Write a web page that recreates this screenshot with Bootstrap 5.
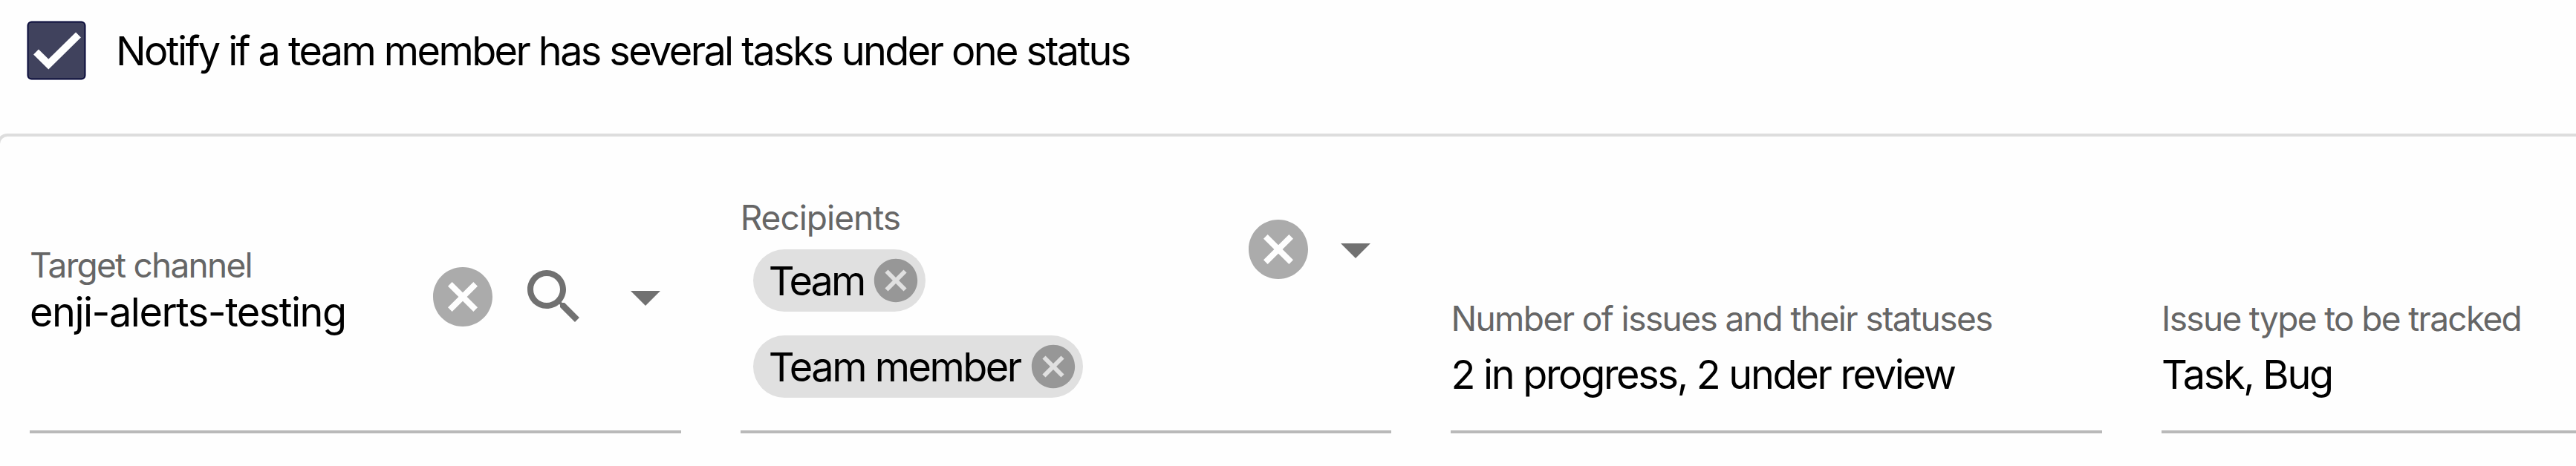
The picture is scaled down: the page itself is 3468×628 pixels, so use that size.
<!DOCTYPE html>
<html lang="en">
<head>
  <meta charset="UTF-8">
  <title>Notification settings</title>
  <link href="https://cdn.jsdelivr.net/npm/bootstrap@5.3.0/dist/css/bootstrap.min.css" rel="stylesheet">
  <style>
    body {
      background: #fefefe;
      color: #000;
      font-family: Inter, "Liberation Sans", sans-serif;
      font-size: 54px;
      line-height: 68px;
      letter-spacing: -2.3px;
      white-space: nowrap;
      overflow: hidden;
    }
    svg { flex: none; display: block; }

    .notify-row { height: 180px; padding: 28px 0 0 36px; gap: 40px; letter-spacing: -2.6px; }
    .notify-row label { line-height: 81px; }

    .panel { height: 448px; margin-left: -4px; padding-left: 40px; border: solid #ddd; border-width: 4px 0 0 4px; border-radius: 14px 0 0 0; gap: 80px; }
    .field { flex: none; width: 876.7px; height: 400px; border-bottom: 4px solid #b9b9b9; }
    .field:last-child { flex: 1 1 0; }
    .field-label { color: #666; font-size: 46px; line-height: 56px; letter-spacing: -1.57px; }

    .channel { padding-top: 145px; }
    .channel .field-label { letter-spacing: -1.75px; }
    .channel .field-value { margin-top: 2px; letter-spacing: -1.48px; }
    .channel .field-icons { margin-top: 23px; gap: 27px; }
    .recipients { padding-top: 81px; }
    .recipients .field-label { letter-spacing: -1px; }
    .recipients .field-icons { margin-top: 23px; gap: 8px; }
    .plain { padding-top: 217px; }
    .plain .field-value { margin-top: 14px; }
    .plain:last-child .field-label { letter-spacing: -1.68px; }

    .field-icons { height: 96px; color: #717171; }
    .clear-icon { color: #ababab; }

    .chips { margin: 15px 0 0 17px; gap: 32px; }
    .chip { height: 84px; padding: 0 5px 0 21px; background: #e0e0e0; }
    .chip span { padding-top: 1px; }
    .chip svg { color: #979797; }
    .chip-team { width: 232px; letter-spacing: -2.9px; }
    .chip-member { width: 444px; letter-spacing: -2.5px; }
  </style>
</head>
<body>
  <svg width="0" height="0" class="d-none">
    <symbol id="cancel" viewBox="0 0 24 24">
      <path fill="currentColor" d="M12 2C6.47 2 2 6.47 2 12s4.47 10 10 10 10-4.47 10-10S17.53 2 12 2zm5 13.59L15.59 17 12 13.41 8.41 17 7 15.59 10.59 12 7 8.41 8.41 7 12 10.59 15.59 7 17 8.41 13.41 12 17 15.59z"/>
    </symbol>
    <symbol id="search" viewBox="0 0 24 24">
      <path fill="currentColor" d="M15.5 14h-.79l-.28-.27C15.41 12.59 16 11.11 16 9.5 16 5.91 13.09 3 9.5 3S3 5.91 3 9.5 5.91 16 9.5 16c1.61 0 3.09-.59 4.23-1.57l.27.28v.79l5 4.99L20.49 19l-4.99-5zm-6 0C7.01 14 5 11.99 5 9.5S7.01 5 9.5 5 14 7.01 14 9.5 11.99 14 9.5 14z"/>
    </symbol>
    <symbol id="arrow" viewBox="0 0 24 24">
      <path fill="currentColor" d="M7 10l5 5 5-5z"/>
    </symbol>
  </svg>

  <div class="notify-row d-flex align-items-start">
    <svg width="80" height="80" viewBox="0 0 80 80">
      <rect x="1.5" y="1.5" width="77" height="77" rx="5" fill="#40425d" stroke="#090b3b" stroke-width="2"/>
      <path d="M12.5 42l16.8 16.6 40.2-39.6" fill="none" stroke="#fff" stroke-width="9.8"/>
    </svg>
    <label>Notify if a team member has several tasks under one status</label>
  </div>

  <div class="panel d-flex">
    <div class="field channel d-flex justify-content-between">
      <div>
        <div class="field-label">Target channel</div>
        <div class="field-value">enji-alerts-testing</div>
      </div>
      <div class="field-icons d-flex">
        <svg class="clear-icon" width="96" height="96"><use href="#cancel"/></svg>
        <svg width="96" height="96"><use href="#search"/></svg>
        <svg width="96" height="96"><use href="#arrow"/></svg>
      </div>
    </div>

    <div class="field recipients d-flex justify-content-between">
      <div>
        <div class="field-label">Recipients</div>
        <div class="chips d-flex flex-column">
          <div class="chip chip-team rounded-pill d-flex align-items-center justify-content-between">
            <span>Team</span>
            <svg width="70" height="70"><use href="#cancel"/></svg>
          </div>
          <div class="chip chip-member rounded-pill d-flex align-items-center justify-content-between">
            <span>Team member</span>
            <svg width="70" height="70"><use href="#cancel"/></svg>
          </div>
        </div>
      </div>
      <div class="field-icons d-flex">
        <svg class="clear-icon" width="96" height="96"><use href="#cancel"/></svg>
        <svg width="96" height="96"><use href="#arrow"/></svg>
      </div>
    </div>

    <div class="field plain">
      <div class="field-label">Number of issues and their statuses</div>
      <div class="field-value">2 in progress, 2 under review</div>
    </div>

    <div class="field plain">
      <div class="field-label">Issue type to be tracked</div>
      <div class="field-value">Task, Bug</div>
    </div>
  </div>

  <script src="https://cdn.jsdelivr.net/npm/bootstrap@5.3.0/dist/js/bootstrap.bundle.min.js"></script>
</body>
</html>
